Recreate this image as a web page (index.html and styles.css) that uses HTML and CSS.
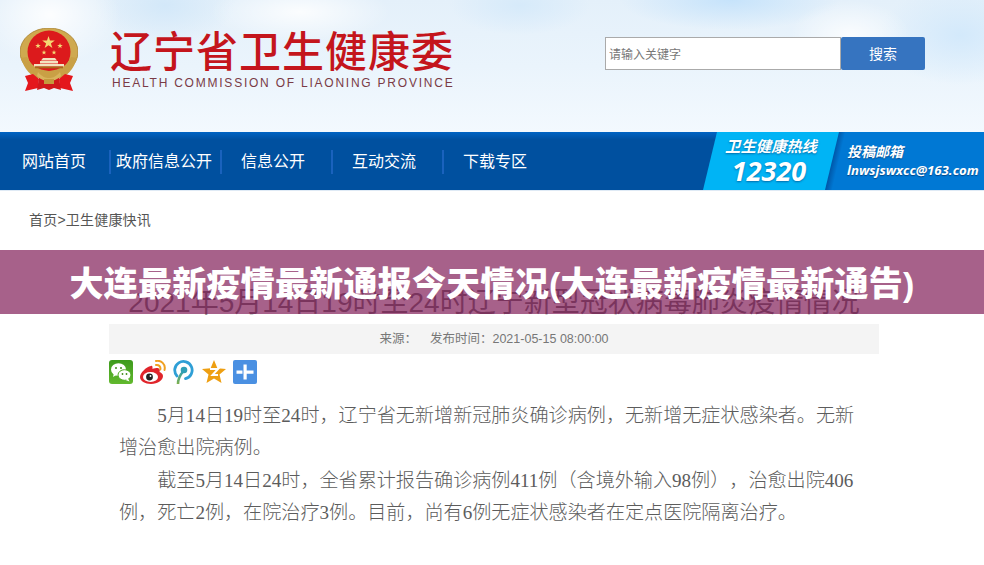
FILE: index.html
```html
<!DOCTYPE html>
<html lang="zh-CN">
<head>
  <meta charset="UTF-8" />
  <title>大连最新疫情最新通报今天情况(大连最新疫情最新通告)</title>
  <link rel="stylesheet" href="styles.css">
</head>
<body>
  <header class="top">
    <div class="logo">
      <svg class="emblem" viewBox="0 0 58 63" width="58" height="63">
        <ellipse cx="29" cy="24" rx="29" ry="24" fill="#cfa94f" />
        <ellipse cx="29" cy="24" rx="29" ry="24" fill="none" stroke="#a8812e" stroke-width=".8" />
        <circle cx="29" cy="24" r="21.500" fill="#dc1a1c" />
        <path d="M1 30 Q6 47 20 51 L38 51 Q52 47 57 30 L51 29 Q46 41 29 43 Q12 41 7 29Z" fill="#c9a045" />
        <path d="M28.500 8l1.500 4.600 4.800 0-3.900 2.800 1.500 4.600-3.900-2.800-3.900 2.800 1.500-4.600-3.900-2.800 4.800 0z" fill="#f4d873" />
        <path d="M18 15l.7 2 2.100 0-1.700 1.300.6 2-1.700-1.200-1.700 1.200.6-2-1.700-1.300 2.100 0zM40 15l.7 2 2.100 0-1.700 1.300.6 2-1.700-1.200-1.700 1.200.6-2-1.700-1.300 2.100 0zM24 22l.6 1.700 1.800 0-1.400 1.100.5 1.700-1.500-1-1.500 1 .5-1.700-1.400-1.100 1.800 0zM34 22l.6 1.700 1.800 0-1.400 1.100.5 1.700-1.500-1-1.500 1 .5-1.700-1.400-1.100 1.800 0z" fill="#f4d873" />
        <path d="M23 30h12l2 2.500H21zM20 33h18v2.500H20zM14 36h30v2.500H14z" fill="#f3e3c0" />
        <path d="M15 38.500h28v1.800H15z" fill="#a86a1c" />
        <path d="M5 48l8-2 6 5-1 9-13 3 3-8zM53 48l-8-2-6 5 1 9 13 3-3-8z" fill="#e4171c" />
        <path d="M19 50h20l2 12-7-2-5 2-5-2-7 2z" fill="#d0181c" />
        <path d="M18 44c4 5 8 6 11 6s7-1 11-6l1 4c-4 4-8 5-12 5s-8-1-12-5z" fill="#d8b45c" />
        <path d="M24 51h10v5H24z" fill="#c49a3e" />
      </svg>
      <div class="logo-text">
        <div class="logo-cn">辽宁省卫生健康委</div>
        <div class="logo-en">HEALTH COMMISSION OF LIAONING PROVINCE</div>
      </div>
    </div>
    <form class="search">
      <input type="text" placeholder="请输入关键字" />
      <button type="button">搜索</button>
    </form>
  </header>

  <nav class="nav">
    <div class="nav-links">
      <a href="#">网站首页</a>
      <a href="#">政府信息公开</a>
      <a href="#">信息公开</a>
      <a href="#">互动交流</a>
      <a href="#">下载专区</a>
    </div>
    <div class="hotline">
      <div class="hotline-label">卫生健康热线</div>
      <div class="hotline-num">12320</div>
    </div>
    <div class="mail">
      <div class="mail-label">投稿邮箱</div>
      <div class="mail-addr">lnwsjswxcc@163.com</div>
    </div>
  </nav>

  <div class="crumb">首页&gt;卫生健康快讯</div>

  <main class="article">
    <h1>2021年5月14日19时至24时辽宁新型冠状病毒肺炎疫情情况</h1>
    <div class="meta"><span>来源：</span><span>发布时间：2021-05-15 08:00:00</span></div>
    <div class="share">
      <svg viewBox="0 0 24 24" width="24" height="24">
        <defs>
          <linearGradient id="wx" x1="0" y1="0" x2="0" y2="1">
            <stop offset="0" stop-color="#3d9a1c" />
            <stop offset="1" stop-color="#62b92e" />
          </linearGradient>
        </defs>
        <rect width="24" height="24" rx="3" fill="url(#wx)" />
        <ellipse cx="9.500" cy="9.500" rx="7.500" ry="6.300" fill="#fff" />
        <path d="M5 13l-1 4 4-2.500z" fill="#fff" />
        <circle cx="7" cy="8" r="1" fill="#3f8c1a" />
        <circle cx="12" cy="8" r="1" fill="#3f8c1a" />
        <ellipse cx="15.500" cy="15" rx="6.500" ry="5.300" fill="#fff" stroke="#4fab22" />
        <path d="M19 18.500l1.500 3-4-1.500z" fill="#fff" />
        <circle cx="13.500" cy="14" r=".9" fill="#3f8c1a" />
        <circle cx="17.500" cy="14" r=".9" fill="#3f8c1a" />
      </svg>
      <svg viewBox="0 0 26 24" width="26" height="24">
        <path d="M11 6C6 7 0 13 0 17c0 4 5 7 11 7 7 0 12-4 12-8 0-2-2-3.500-3.500-4 .8-2 .3-4-3-4-2 0-4 1-4 1s.5-4-1.500-3z" fill="#e0242a" />
        <ellipse cx="10.500" cy="17" rx="7.500" ry="5" fill="#fff" />
        <circle cx="9.500" cy="17" r="3.400" fill="#222" />
        <circle cx="10.500" cy="16" r=".9" fill="#fff" />
        <path d="M16 1c5-1 10 3 8.500 9M16 5c2.800-.5 5 1.500 4.300 4.500" fill="none" stroke="#f0a020" stroke-width="2" stroke-linecap="round" />
      </svg>
      <svg viewBox="0 0 22 24" width="22" height="24">
        <defs>
          <linearGradient id="pstem" x1="0" y1="1" x2="0" y2="0">
            <stop offset="0" stop-color="#7fb04a" />
            <stop offset="1" stop-color="#2f9fb6" />
          </linearGradient>
        </defs>
        <path d="M4 16A8.700 8.700 0 1 1 12.500 18.600" fill="none" stroke="#2f9fd6" stroke-width="2.800" stroke-linecap="round" />
        <path d="M5 24c0-5 2-9 5.500-13" fill="none" stroke="url(#pstem)" stroke-width="2.600" />
        <circle cx="11" cy="10" r="3.300" fill="#2f9fb6" />
      </svg>
      <svg viewBox="0 0 24 24" width="24" height="24">
        <path d="M12 0l3.400 8.200 8.600.7-6.500 5.500 2 8.600-7.500-4.600-7.500 4.600 2-8.600L0 8.900l8.600-.7z" fill="#ee9f12" />
        <path d="M8 9h8l-5.500 6H16" fill="none" stroke="#fff" stroke-width="2" />
      </svg>
      <svg viewBox="0 0 24 24" width="24" height="24">
        <rect width="24" height="24" rx="2" fill="#4a90e2" />
        <path d="M10.500 4.500h3.200v15h-3.200zM3.500 10.500H9.500v3.200H3.500zM13.700 10.500h6.800v3.200h-6.800z" fill="#fff" />
      </svg>
    </div>
    <div class="content">
      <p>5月14日19时至24时，辽宁省无新增新冠肺炎确诊病例，无新增无症状感染者。无新增治愈出院病例。</p>
      <p>截至5月14日24时，全省累计报告确诊病例411例（含境外输入98例），治愈出院406例，死亡2例，在院治疗3例。目前，尚有6例无症状感染者在定点医院隔离治疗。</p>
    </div>
  </main>

  <div class="banner">大连最新疫情最新通报今天情况(大连最新疫情最新通告)</div>
</body>
</html>
```

FILE: styles.css
```css
* { box-sizing: border-box; }
body {
  margin: 0;
  background: #fff;
  font-family: "Liberation Sans", "Noto Sans CJK SC", sans-serif;
  color: #333;
  overflow: hidden;
}

/* sky: blue patches and white clouds over a pale base */
.top {
  height: 132px;
  display: flex;
  align-items: flex-start;
  justify-content: space-between;
  padding: 28px 59px 0 20px;
  background:
    radial-gradient(ellipse 70px 50px at 50px 15px, rgba(255,255,255,.9) 0%, rgba(255,255,255,0) 100%),
    radial-gradient(ellipse 90px 30px at 300px 12px, rgba(255,255,255,.85) 0%, rgba(255,255,255,0) 100%),
    radial-gradient(ellipse 60px 35px at 850px 35px, rgba(255,255,255,.8) 0%, rgba(255,255,255,0) 100%),
    radial-gradient(ellipse 110px 30px at 730px 0, #c6e3fb 0%, rgba(198,227,251,0) 100%),
    radial-gradient(ellipse 80px 50px at 960px 35px, #d3e9fb 0%, rgba(211,233,251,0) 100%),
    radial-gradient(ellipse 70px 40px at 165px 5px, #d3e8f9 0%, rgba(211,232,249,0) 100%),
    radial-gradient(ellipse 70px 30px at 520px 5px, #d6eafa 0%, rgba(214,234,250,0) 100%),
    linear-gradient(to bottom, #e4f0fa 0%, #eaf4fc 50%, #f3f9fe 100%);
}

.logo {
  display: flex;
  gap: 32px;
}
.logo-text {
  padding-top: 1px;
}
.logo-cn {
  font-size: 42px;
  font-weight: 500;
  line-height: 47px;
  letter-spacing: 1px;
  color: #c4151c;
  white-space: nowrap;
}
.logo-en {
  margin: 0 0 0 2px;
  font-size: 12px;
  line-height: 14px;
  letter-spacing: 1.770px;
  color: #7a3b46;
  white-space: nowrap;
}

.search {
  display: flex;
  margin-top: 9px;
}
.search input {
  width: 236px;
  height: 33px;
  padding: 2px 3px 0;
  border: 1px solid #aaa;
  background: #fff;
  font-family: inherit;
  font-size: 12px;
}
.search input::placeholder {
  color: #777;
}
.search button {
  width: 84px;
  height: 33px;
  padding: 0 0 2px;
  border: none;
  border-radius: 2px;
  background: #3674c0;
  color: #fff;
  font-family: inherit;
  font-size: 14px;
}

.nav {
  height: 58px;
  display: flex;
  background: linear-gradient(to bottom, #0064c4 0, #00509f 8px);
  color: #fff;
}
.nav-links {
  width: 703px;
  display: flex;
  align-items: flex-start;
  padding-top: 18px;
}
.nav-links a {
  width: 111px;
  height: 24px;
  padding-left: 19px;
  color: #fff;
  text-decoration: none;
  white-space: nowrap;
  font-size: 16px;
  line-height: 24px;
  border-left: 2px solid #1a62bd;
}
.nav-links a:first-child {
  width: 109px;
  padding-left: 22px;
  border-left: none;
}
.nav-links a:nth-child(2) {
  padding-left: 5px;
}

.hotline {
  position: relative;
  z-index: 1;
  width: 136px;
  flex-shrink: 0;
  padding-top: 5px;
  background: #00b4f5;
  clip-path: polygon(14px 0, 100% 0, 122px 100%, 0 100%);
  text-align: center;
  font-style: italic;
  font-weight: 700;
  text-shadow: 0 1px 2px rgba(0, 60, 120, .6);
}
.hotline-label {
  font-size: 15.300px;
  line-height: 20px;
}
.hotline-num {
  padding-right: 4px;
  font-size: 27px;
  line-height: 28px;
  font-family: "Open Sans", sans-serif;
}
.mail {
  flex: 1;
  margin-left: -14px;
  padding: 10px 0 0 22px;
  background: linear-gradient(103deg, #00509f 0, #00509f 12px, #0078d4 20px);
  font-style: italic;
  font-weight: 700;
  text-shadow: 0 1px 1px rgba(0, 40, 90, .6);
  white-space: nowrap;
}
.mail-label {
  font-size: 14px;
  line-height: 20px;
}
.mail-addr {
  font-size: 13.200px;
  line-height: 17px;
  font-family: "Open Sans", sans-serif;
}

.crumb {
  height: 60px;
  padding: 20px 0 0 29px;
  border-top: 1px solid #dfeaf5;
  font-size: 14px;
  line-height: 18px;
  letter-spacing: .2px;
  color: #555;
}

.article {
  width: 770px;
  margin-left: 109px;
}
.article h1 {
  margin: 0 0 6px;
  height: 68px;
  padding-top: 37px;
  font-size: 28px;
  font-weight: 400;
  line-height: 32px;
  text-align: center;
  white-space: nowrap;
  color: #333;
}
.meta {
  height: 30px;
  display: flex;
  justify-content: center;
  gap: 13px;
  background: #f4f4f4;
  font-size: 12.500px;
  line-height: 31px;
  color: #777;
}
.share {
  display: flex;
  gap: 7px;
  margin-top: 6px;
}
.content {
  width: 751px;
  margin-top: 16px;
  padding-left: 10px;
  font-family: "Liberation Serif", "Noto Sans CJK SC", serif;
  font-size: 19.100px;
  font-weight: 300;
  line-height: 32.300px;
  text-spacing-trim: space-all;
  color: #5c5c5c;
}
.content p {
  margin: 0;
  text-indent: 2em;
}

.banner {
  position: absolute;
  left: 0;
  top: 250px;
  width: 100%;
  height: 64px;
  background: rgba(142, 53, 105, .78);
  color: #fff;
  font-size: 34px;
  font-weight: 900;
  letter-spacing: .25px;
  line-height: 68px;
  text-align: center;
  white-space: nowrap;
}
```
